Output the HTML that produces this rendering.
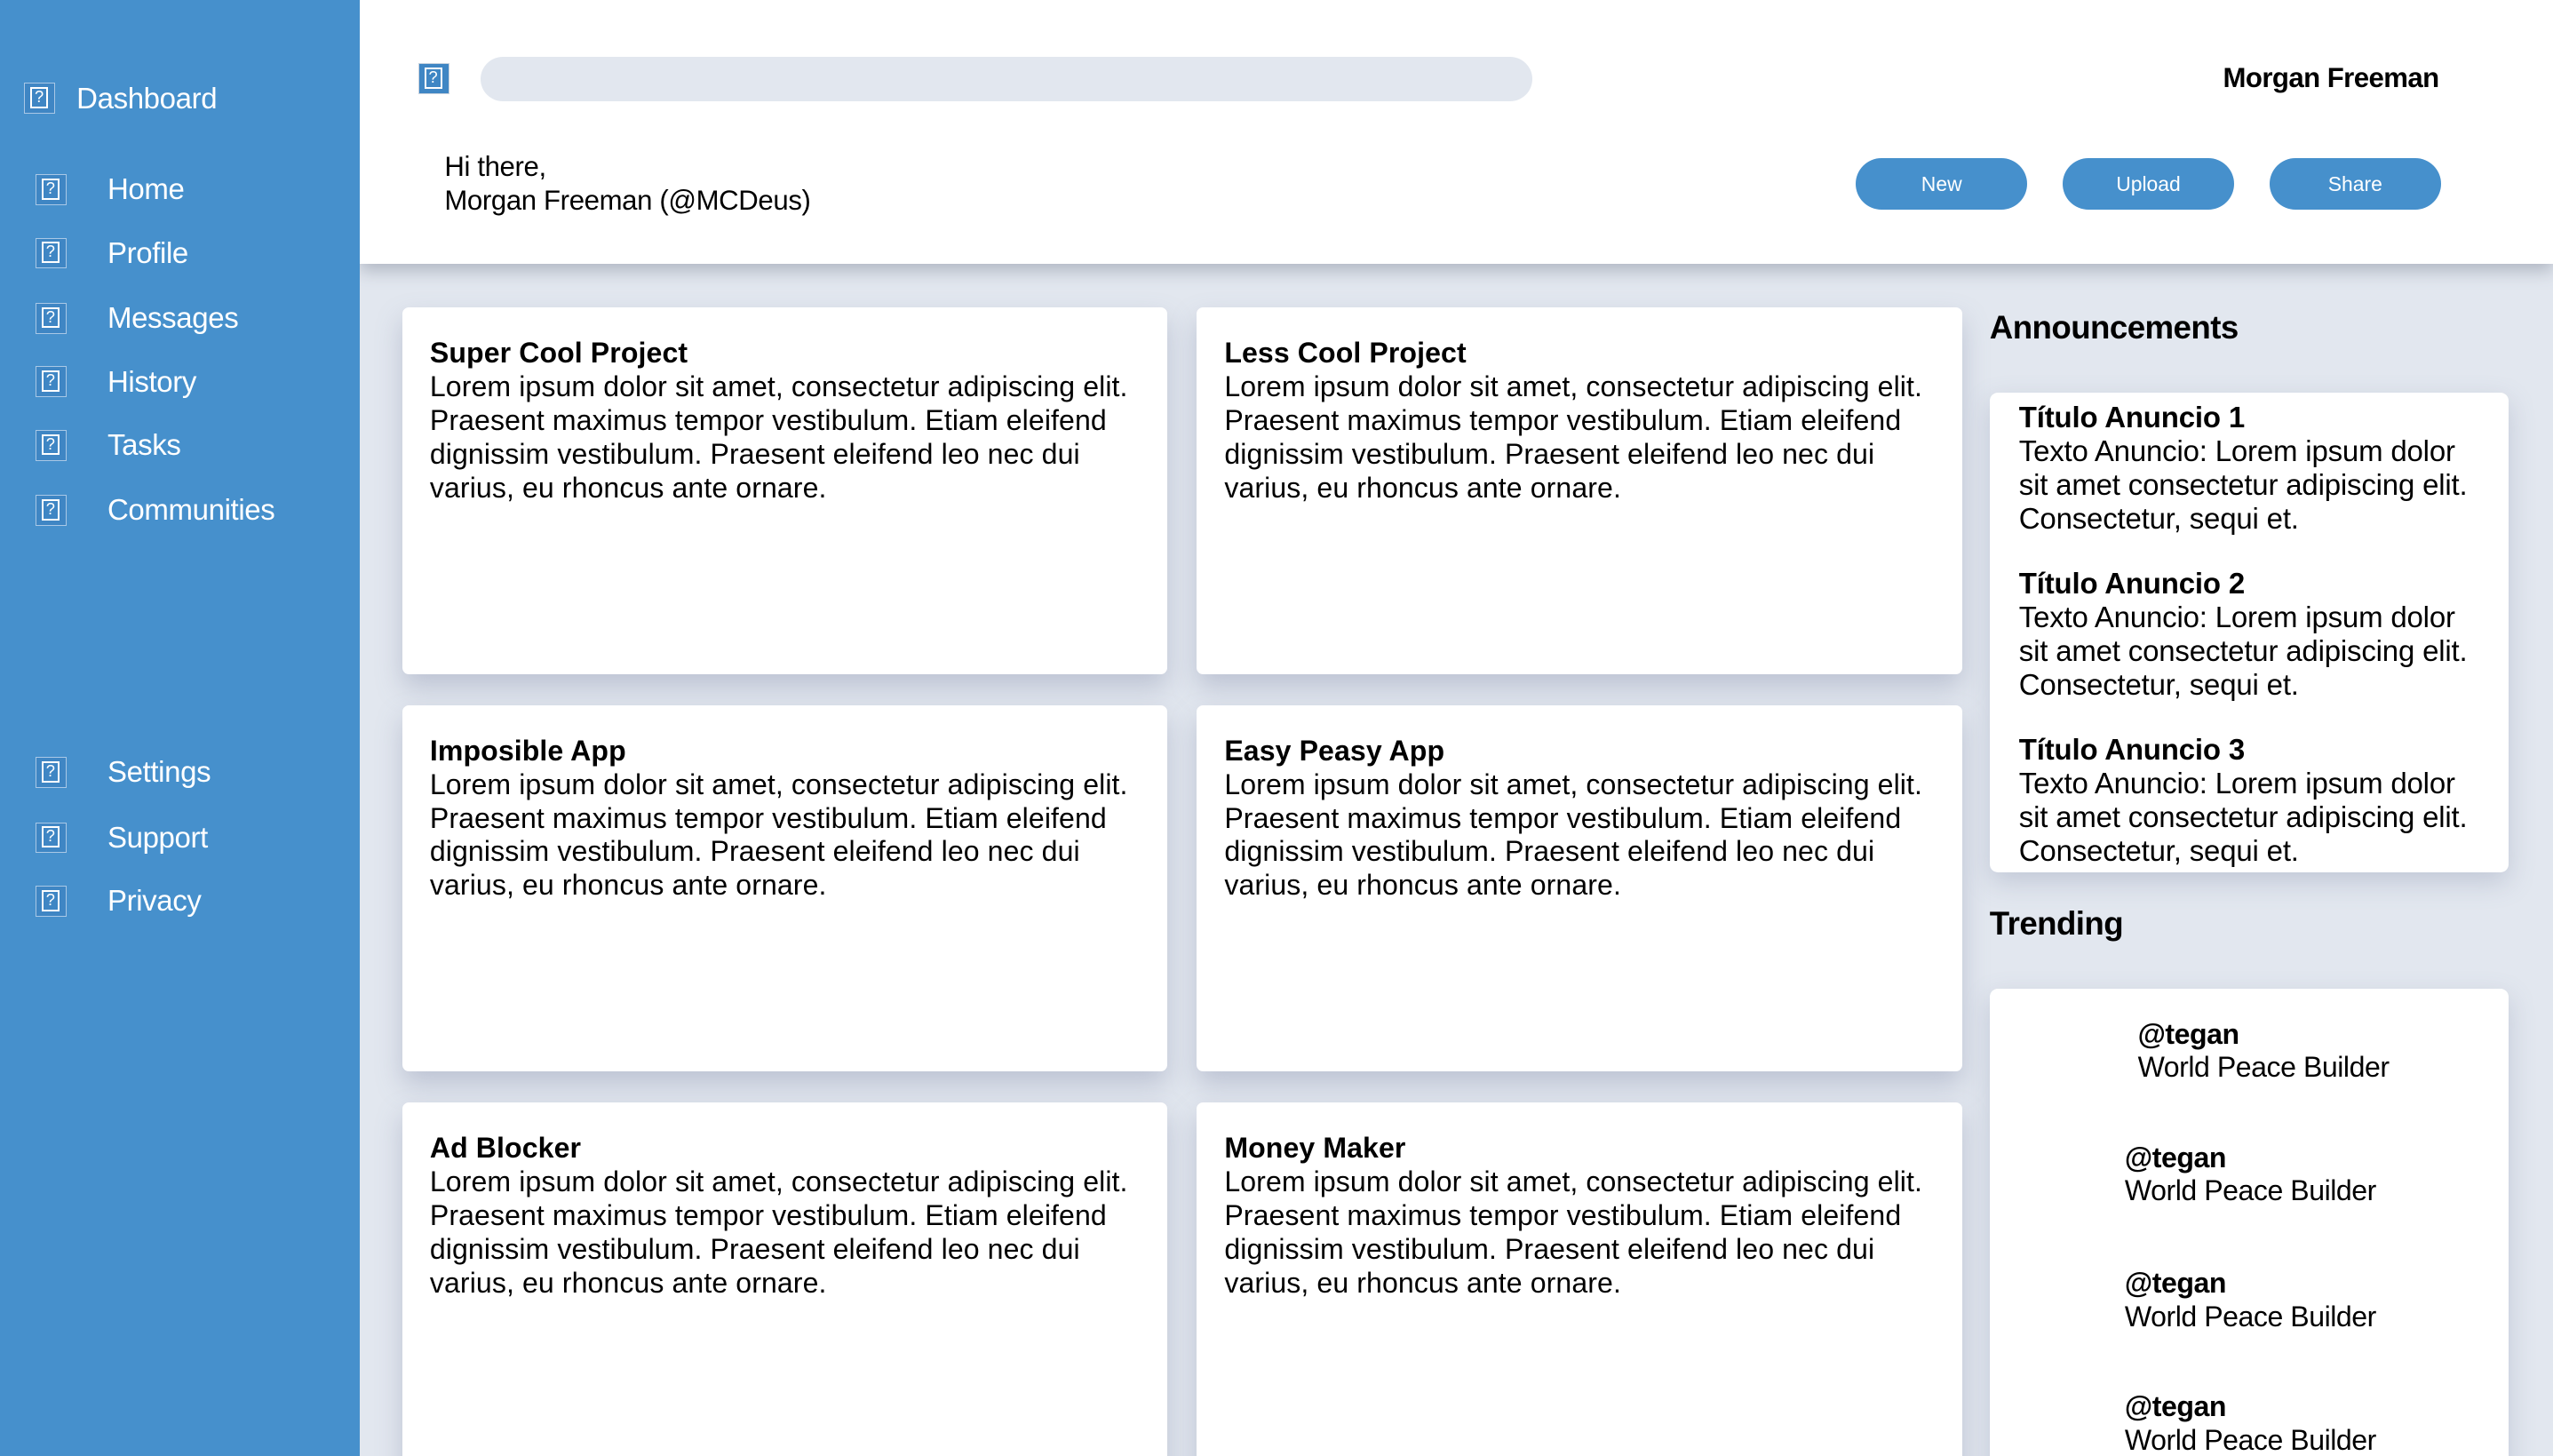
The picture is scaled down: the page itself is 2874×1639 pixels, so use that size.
<!DOCTYPE html>
<html><head><meta charset="utf-8"><style>
html,body{margin:0;padding:0}
html{zoom:1.8329;height:894px;overflow:hidden}
body{width:1568px;height:894px;position:relative;overflow:hidden;background:#e2e7ef;font-family:"Liberation Sans",Arial,sans-serif;color:#000}
.abs{position:absolute}
.side{left:0;top:0;width:221px;height:894px;background:#4690cc;z-index:3}
.ic{position:absolute;width:19px;height:19px;border:1px solid #a9c8e6;box-sizing:border-box;background:#3f86c4}
.ic::after{content:"?";position:absolute;left:3px;top:2px;width:11px;height:13px;border:1.5px solid #fff;box-sizing:border-box;color:#fff;font-size:10px;line-height:10px;text-align:center}
.nav{position:absolute;color:#fff;font-size:18px;letter-spacing:-0.2px}
.head{left:221px;top:0;width:1347px;height:162px;background:#fff;box-shadow:0 4px 10px rgba(80,90,110,.35);z-index:2}
.btn{position:absolute;top:97px;width:105px;height:32px;border-radius:16px;background:#4690cc;color:#fff;font-size:12.5px;text-align:center;line-height:32px}
.card{position:absolute;width:470px;height:225px;background:#fff;border-radius:4px;box-shadow:0 8px 16px rgba(120,130,160,.35)}
.card .t{position:absolute;left:17px;top:18px;font-size:17.5px;line-height:20.7px;letter-spacing:0.05px;white-space:nowrap}
b{font-weight:bold}
.h2{position:absolute;font-size:20px;font-weight:bold;letter-spacing:-0.3px}
.panel{position:absolute;left:1222px;width:319px;background:#fff;border-radius:5px;box-shadow:0 6px 16px rgba(120,130,160,.3)}
.ann{position:absolute;left:18px;font-size:18px;line-height:20.7px;letter-spacing:-0.1px;white-space:nowrap}
.tr{position:absolute;font-size:17.5px;line-height:20.5px;letter-spacing:-0.25px;white-space:nowrap}
</style></head><body>
<div class="abs side">
  <div class="ic" style="left:15px;top:51px"></div><div class="nav" style="left:47px;top:50px">Dashboard</div>
  <div class="ic" style="left:22px;top:107px"></div><div class="nav" style="left:66px;top:106px">Home</div>
  <div class="ic" style="left:22px;top:146px"></div><div class="nav" style="left:66px;top:145px">Profile</div>
  <div class="ic" style="left:22px;top:186px"></div><div class="nav" style="left:66px;top:185px">Messages</div>
  <div class="ic" style="left:22px;top:225px"></div><div class="nav" style="left:66px;top:224px">History</div>
  <div class="ic" style="left:22px;top:264px"></div><div class="nav" style="left:66px;top:263px">Tasks</div>
  <div class="ic" style="left:22px;top:304px"></div><div class="nav" style="left:66px;top:303px">Communities</div>
  <div class="ic" style="left:22px;top:465px"></div><div class="nav" style="left:66px;top:464px">Settings</div>
  <div class="ic" style="left:22px;top:505px"></div><div class="nav" style="left:66px;top:504px">Support</div>
  <div class="ic" style="left:22px;top:544px"></div><div class="nav" style="left:66px;top:543px">Privacy</div>
</div>
<div class="abs head">
  <div class="ic" style="left:36px;top:39px;border-color:#c9d3de"></div>
  <div class="abs" style="left:74px;top:35px;width:646px;height:27px;border-radius:14px;background:#e2e7ef"></div>
  <div class="abs" style="right:70px;top:38px;font-size:17px;font-weight:bold;letter-spacing:-0.3px">Morgan Freeman</div>
  <div class="abs" style="left:52px;top:92px;font-size:17px;line-height:21px;letter-spacing:-0.2px">Hi there,<br>Morgan Freeman (@MCDeus)</div>
  <div class="btn" style="left:919px">New</div>
  <div class="btn" style="left:1046px">Upload</div>
  <div class="btn" style="left:1173px">Share</div>
</div>
<div class="card" style="left:247px;top:189px"><div class="t"><b>Super Cool Project</b><br>Lorem ipsum dolor sit amet, consectetur adipiscing elit.<br>Praesent maximus tempor vestibulum. Etiam eleifend<br>dignissim vestibulum. Praesent eleifend leo nec dui<br>varius, eu rhoncus ante ornare.</div></div>
<div class="card" style="left:735px;top:189px"><div class="t"><b>Less Cool Project</b><br>Lorem ipsum dolor sit amet, consectetur adipiscing elit.<br>Praesent maximus tempor vestibulum. Etiam eleifend<br>dignissim vestibulum. Praesent eleifend leo nec dui<br>varius, eu rhoncus ante ornare.</div></div>
<div class="card" style="left:247px;top:433px"><div class="t"><b>Imposible App</b><br>Lorem ipsum dolor sit amet, consectetur adipiscing elit.<br>Praesent maximus tempor vestibulum. Etiam eleifend<br>dignissim vestibulum. Praesent eleifend leo nec dui<br>varius, eu rhoncus ante ornare.</div></div>
<div class="card" style="left:735px;top:433px"><div class="t"><b>Easy Peasy App</b><br>Lorem ipsum dolor sit amet, consectetur adipiscing elit.<br>Praesent maximus tempor vestibulum. Etiam eleifend<br>dignissim vestibulum. Praesent eleifend leo nec dui<br>varius, eu rhoncus ante ornare.</div></div>
<div class="card" style="left:247px;top:677px;height:240px"><div class="t"><b>Ad Blocker</b><br>Lorem ipsum dolor sit amet, consectetur adipiscing elit.<br>Praesent maximus tempor vestibulum. Etiam eleifend<br>dignissim vestibulum. Praesent eleifend leo nec dui<br>varius, eu rhoncus ante ornare.</div></div>
<div class="card" style="left:735px;top:677px;height:240px"><div class="t"><b>Money Maker</b><br>Lorem ipsum dolor sit amet, consectetur adipiscing elit.<br>Praesent maximus tempor vestibulum. Etiam eleifend<br>dignissim vestibulum. Praesent eleifend leo nec dui<br>varius, eu rhoncus ante ornare.</div></div>
<div class="h2" style="left:1222px;top:190px">Announcements</div>
<div class="panel" style="top:241px;height:295px">
  <div class="ann" style="top:5px"><b>Título Anuncio 1</b><br>Texto Anuncio: Lorem ipsum dolor<br>sit amet consectetur adipiscing elit.<br>Consectetur, sequi et.</div>
  <div class="ann" style="top:107px"><b>Título Anuncio 2</b><br>Texto Anuncio: Lorem ipsum dolor<br>sit amet consectetur adipiscing elit.<br>Consectetur, sequi et.</div>
  <div class="ann" style="top:209px"><b>Título Anuncio 3</b><br>Texto Anuncio: Lorem ipsum dolor<br>sit amet consectetur adipiscing elit.<br>Consectetur, sequi et.</div>
</div>
<div class="h2" style="left:1222px;top:556px">Trending</div>
<div class="panel" style="top:607px;height:310px">
  <div class="tr" style="left:91px;top:18px"><b>@tegan</b><br>World Peace Builder</div>
  <div class="tr" style="left:83px;top:94px"><b>@tegan</b><br>World Peace Builder</div>
  <div class="tr" style="left:83px;top:171px"><b>@tegan</b><br>World Peace Builder</div>
  <div class="tr" style="left:83px;top:247px"><b>@tegan</b><br>World Peace Builder</div>
</div>
</body></html>
